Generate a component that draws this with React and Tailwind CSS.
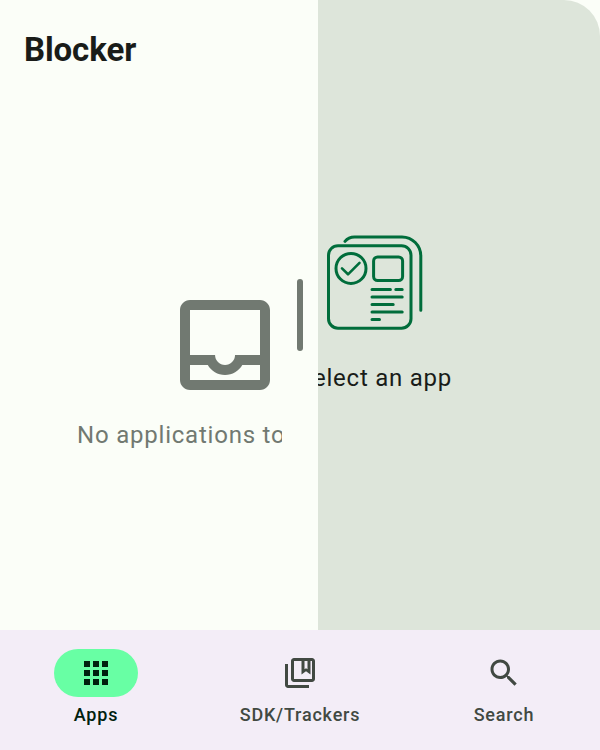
import React from 'react';

function InboxIcon() {
  return (
    <svg viewBox="0 0 24 24" className="size-[120px] shrink-0 fill-[#717971]">
      <path d="M19 3H5c-1.1 0-2 .9-2 2v14c0 1.1.9 2 2 2h14c1.1 0 2-.9 2-2V5c0-1.1-.9-2-2-2zm0 16H5v-3h3.56c.69 1.19 1.97 2 3.45 2s2.75-.81 3.45-2H19v3zm0-5h-4.99c0 1.1-.9 2-2 2s-2-.9-2-2H5V5h14v9z" />
    </svg>
  );
}

function AppListIcon() {
  return (
    <svg
      viewBox="327 235 96 96"
      className="size-24 shrink-0 fill-none stroke-[#006d3b] stroke-3"
      strokeLinecap="round"
      strokeLinejoin="round"
    >
      <path d="M345 241.4C347.3 238.5 350.5 237 354.5 237H402A18.8 19 0 0 1 420.8 256V310.2" />
      <rect x="328.5" y="245.7" width="82.5" height="82.5" rx="9.5" />
      <circle cx="351" cy="268.4" r="15" />
      <path d="M342 268.400L348 274.300L359.500 262.800" className="stroke-[2.6]" />
      <rect x="373.6" y="256.9" width="29" height="23.6" rx="4" />
      <path d="M372 289.6H390.4M395.8 289.6H402.2M372 297H402.2M372 304.5H393.2M372 312H402.2M372 319.4H379.5" />
    </svg>
  );
}

function AppsIcon() {
  return (
    <svg viewBox="0 0 24 24" className="size-9 fill-[#00210e]">
      <path d="M4 8h4V4H4v4zm6 12h4v-4h-4v4zm-6 0h4v-4H4v4zm0-6h4v-4H4v4zm6 0h4v-4h-4v4zm6-10v4h4V4h-4zm-6 4h4V4h-4v4zm6 6h4v-4h-4v4zm0 6h4v-4h-4v4z" />
    </svg>
  );
}

function TrackersIcon() {
  return (
    <svg viewBox="0 0 24 24" className="size-9 fill-[#414942]">
      <path d="M4 6H2v14c0 1.1.9 2 2 2h14v-2H4V6zM20 2H8c-1.1 0-2 .9-2 2v12c0 1.1.9 2 2 2h12c1.1 0 2-.9 2-2V4c0-1.1-.9-2-2-2zm0 14H8V4h5v9l3-2.25L19 13V4h1v12zm-5-6.5V4h2v5.5l-1-.75-1 .75z" />
    </svg>
  );
}

function SearchIcon() {
  return (
    <svg viewBox="0 0 24 24" className="size-9 fill-[#414942]">
      <path d="M15.5 14h-.79l-.28-.27C15.41 12.59 16 11.11 16 9.5 16 5.91 13.09 3 9.5 3S3 5.91 3 9.5 5.91 16 9.5 16c1.61 0 3.09-.59 4.23-1.57l.27.28v.79l5 4.99L20.49 19l-4.99-5zm-6 0C7.01 14 5 11.99 5 9.5S7.01 5 9.5 5 14 7.01 14 9.5 11.99 14 9.5 14z" />
    </svg>
  );
}

function NavItem({ icon, label, selected }) {
  return (
    <button className="flex flex-1 flex-col items-center pt-[19px]">
      <span
        className={`flex h-12 w-[84px] items-center justify-center rounded-full ${
          selected ? 'bg-[#68ffa4]' : ''
        }`}
      >
        {icon}
      </span>
      <span
        className={`mt-1.5 text-lg leading-6 font-medium tracking-[0.8px] ${
          selected ? 'text-[#00210e]' : 'text-[#414942]'
        }`}
      >
        {label}
      </span>
    </button>
  );
}

export default function App() {
  return (
    <div className="flex h-[750px] w-[600px] flex-col overflow-hidden bg-[#fbfef8] font-['Roboto',sans-serif]">
      <main className="flex h-[630px] shrink-0">
        <section className="flex w-[282px] shrink-0 flex-col overflow-hidden">
          <h1 className="h-24 pt-[29px] pl-6 text-[33px] leading-[42px] font-bold tracking-[-0.1px] text-[#191c19]">
            Blocker
          </h1>
          <div className="flex w-[450px] flex-col items-center pt-[189px]">
            <InboxIcon />
            <p className="mt-3 text-2xl leading-9 tracking-[0.78px] whitespace-nowrap text-[#717971]">
              No applications to display
            </p>
          </div>
        </section>
        <div className="flex w-9 shrink-0 items-center justify-center">
          <div className="h-[72px] w-1.5 rounded-full bg-[#717971]" />
        </div>
        <section className="flex flex-1 justify-end overflow-hidden rounded-tr-[36px] bg-[#dde5da]">
          <div className="flex w-[450px] shrink-0 flex-col items-center pt-[235px]">
            <AppListIcon />
            <p className="mt-[29px] text-2xl leading-9 tracking-[0.75px] whitespace-nowrap text-[#191c19]">
              Select an app
            </p>
          </div>
        </section>
      </main>
      <nav className="flex h-[120px] shrink-0 gap-3 bg-[#f3edf7]">
        <NavItem icon={<AppsIcon />} label="Apps" selected />
        <NavItem icon={<TrackersIcon />} label="SDK/Trackers" />
        <NavItem icon={<SearchIcon />} label="Search" />
      </nav>
    </div>
  );
}
